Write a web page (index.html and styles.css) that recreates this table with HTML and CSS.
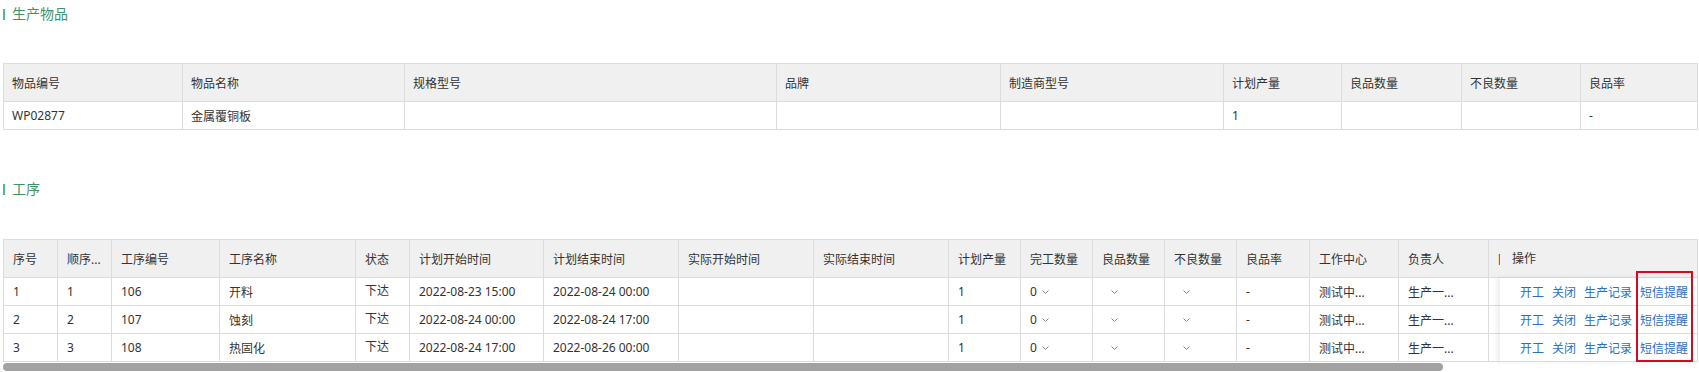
FILE: index.html
```html
<!DOCTYPE html>
<html lang="zh-CN">
<head>
<meta charset="utf-8">
<title>生产物品</title>
<link rel="stylesheet" href="styles.css">
</head>
<body>
<div class="page">
  <div class="section-title first"><span class="bar"></span>生产物品</div>
  <table class="grid items">
    <colgroup>
      <col class="w179"><col class="w222"><col class="w372"><col class="w224"><col class="w223"><col class="w118"><col class="w120"><col class="w119"><col class="w117">
    </colgroup>
    <thead>
      <tr><th>物品编号</th><th>物品名称</th><th>规格型号</th><th>品牌</th><th>制造商型号</th><th>计划产量</th><th>良品数量</th><th>不良数量</th><th>良品率</th></tr>
    </thead>
    <tbody>
      <tr><td>WP02877</td><td>金属覆铜板</td><td></td><td></td><td></td><td>1</td><td></td><td></td><td>-</td></tr>
    </tbody>
  </table>

  <div class="section-title second"><span class="bar"></span>工序</div>
  <div class="proc-wrap">
    <div class="proc-scroll">
      <table class="grid proc">
        <colgroup>
          <col class="w54"><col class="w54"><col class="w108"><col class="w136"><col class="w54"><col class="w134"><col class="w135"><col class="w135"><col class="w135"><col class="w72"><col class="w72"><col class="w72"><col class="w72"><col class="w73"><col class="w89"><col class="w90"><col class="w90"><col class="w200">
        </colgroup>
        <thead>
          <tr><th>序号</th><th>顺序...</th><th>工序编号</th><th>工序名称</th><th>状态</th><th>计划开始时间</th><th>计划结束时间</th><th>实际开始时间</th><th>实际结束时间</th><th>计划产量</th><th>完工数量</th><th>良品数量</th><th>不良数量</th><th>良品率</th><th>工作中心</th><th>负责人</th><th>附件</th><th>操作</th></tr>
        </thead>
        <tbody>
          <tr><td>1</td><td>1</td><td>106</td><td>开料</td><td><span class="status">下达</span></td><td>2022-08-23 15:00</td><td>2022-08-24 00:00</td><td></td><td></td><td>1</td>
            <td><span class="sel">0<svg class="chev" viewBox="0 0 7 4"><polyline points="0.5,0.5 3.5,3.5 6.5,0.5"/></svg></span></td>
            <td><span class="sel empty"><svg class="chev" viewBox="0 0 7 4"><polyline points="0.5,0.5 3.5,3.5 6.5,0.5"/></svg></span></td>
            <td><span class="sel empty"><svg class="chev" viewBox="0 0 7 4"><polyline points="0.5,0.5 3.5,3.5 6.5,0.5"/></svg></span></td>
            <td>-</td><td>测试中...</td><td>生产一...</td><td></td><td></td></tr>
          <tr><td>2</td><td>2</td><td>107</td><td>蚀刻</td><td><span class="status">下达</span></td><td>2022-08-24 00:00</td><td>2022-08-24 17:00</td><td></td><td></td><td>1</td>
            <td><span class="sel">0<svg class="chev" viewBox="0 0 7 4"><polyline points="0.5,0.5 3.5,3.5 6.5,0.5"/></svg></span></td>
            <td><span class="sel empty"><svg class="chev" viewBox="0 0 7 4"><polyline points="0.5,0.5 3.5,3.5 6.5,0.5"/></svg></span></td>
            <td><span class="sel empty"><svg class="chev" viewBox="0 0 7 4"><polyline points="0.5,0.5 3.5,3.5 6.5,0.5"/></svg></span></td>
            <td>-</td><td>测试中...</td><td>生产一...</td><td></td><td></td></tr>
          <tr><td>3</td><td>3</td><td>108</td><td>热固化</td><td><span class="status">下达</span></td><td>2022-08-24 17:00</td><td>2022-08-26 00:00</td><td></td><td></td><td>1</td>
            <td><span class="sel">0<svg class="chev" viewBox="0 0 7 4"><polyline points="0.5,0.5 3.5,3.5 6.5,0.5"/></svg></span></td>
            <td><span class="sel empty"><svg class="chev" viewBox="0 0 7 4"><polyline points="0.5,0.5 3.5,3.5 6.5,0.5"/></svg></span></td>
            <td><span class="sel empty"><svg class="chev" viewBox="0 0 7 4"><polyline points="0.5,0.5 3.5,3.5 6.5,0.5"/></svg></span></td>
            <td>-</td><td>测试中...</td><td>生产一...</td><td></td><td></td></tr>
        </tbody>
      </table>
    </div>
    <div class="fixed-col">
      <div class="fixed-head">操作</div>
      <div class="fixed-body">
        <div class="fixed-cell"><a>开工</a><a>关闭</a><a>生产记录</a><a>短信提醒</a></div>
        <div class="fixed-cell"><a>开工</a><a>关闭</a><a>生产记录</a><a>短信提醒</a></div>
        <div class="fixed-cell"><a>开工</a><a>关闭</a><a>生产记录</a><a>短信提醒</a></div>
      </div>
    </div>
    <div class="mark"></div>
  </div>
  <div class="hscroll"><div class="thumb"></div></div>
</div>
</body>
</html>
```

FILE: styles.css
```css
* { box-sizing: border-box; }
html, body { margin: 0; padding: 0; background: #fff; }
body {
  font-family: "Noto Sans", "Noto Sans CJK SC", sans-serif;
  font-size: 12px;
  color: #333;
}
.page { padding: 0 2px 0 3px; }

.section-title {
  display: flex;
  align-items: center;
  height: 20px;
  line-height: 20px;
  font-size: 14px;
  color: #3d9469;
}
.section-title .bar {
  display: inline-block;
  width: 2px;
  height: 11px;
  background: #46c08a;
  margin-right: 7px;
}
.section-title.first { margin-top: 4px; }
.section-title.second { margin-top: 49px; }

.grid {
  border-collapse: separate;
  border-spacing: 0;
  table-layout: fixed;
  border-top: 1px solid #dcdcdc;
  border-left: 1px solid #dcdcdc;
}
.grid th, .grid td {
  border-right: 1px solid #dcdcdc;
  border-bottom: 1px solid #dcdcdc;
  text-align: left;
  font-weight: normal;
  white-space: nowrap;
  overflow: hidden;
  padding: 0 8px;
  vertical-align: middle;
}
.grid th {
  background: #f0f0f0;
  height: 38px;
}
.grid td { height: 28px; }

.items { width: 1695px; margin-top: 39px; }
.proc { width: 1776px; }
.proc th, .proc td { padding: 0 9px; }

.w54 { width: 54px; } .w72 { width: 72px; } .w73 { width: 73px; }
.w89 { width: 89px; } .w90 { width: 90px; } .w108 { width: 108px; }
.w117 { width: 117px; } .w118 { width: 118px; } .w119 { width: 119px; }
.w120 { width: 120px; } .w134 { width: 134px; } .w135 { width: 135px; }
.w136 { width: 136px; } .w179 { width: 179px; } .w200 { width: 200px; }
.w222 { width: 222px; } .w223 { width: 223px; } .w224 { width: 224px; }
.w372 { width: 372px; }

.status { vertical-align: 3px; }

.sel {
  display: inline-flex;
  align-items: center;
  height: 18px;
  vertical-align: middle;
}
.sel .chev {
  width: 7px; height: 4px;
  margin-left: 5px;
  fill: none; stroke: #888; stroke-width: 1;
}
.sel.empty .chev { margin-left: 9px; }

.proc-wrap {
  position: relative;
  margin-top: 40px;
  width: 1695px;
}
.proc-scroll { overflow: hidden; width: 1695px; }

.fixed-col {
  position: absolute;
  top: 0;
  right: 0;
  width: 198px;
  border-top: 1px solid #dcdcdc;
  border-right: 1px solid #dcdcdc;
}
.fixed-head {
  height: 38px;
  line-height: 37px;
  background: #f0f0f0;
  border-bottom: 1px solid #dcdcdc;
  padding-left: 12px;
}
.fixed-body {
  background: #fff;
  box-shadow: -3px 0 5px rgba(0,0,0,0.08);
}
.fixed-cell {
  height: 28px;
  border-bottom: 1px solid #dcdcdc;
  display: flex;
  align-items: center;
  justify-content: flex-end;
  gap: 8px;
  padding-right: 9px;
}
.fixed-cell a { color: #2a6fc4; cursor: pointer; }

.mark {
  position: absolute;
  left: 1633px;
  top: 32px;
  width: 57px;
  height: 91px;
  border: 2px solid #d40a1e;
}

.hscroll { height: 9px; padding-top: 1px; }
.thumb {
  width: 1440px;
  height: 8px;
  border-radius: 4px;
  background: #a2a2a2;
}
```
